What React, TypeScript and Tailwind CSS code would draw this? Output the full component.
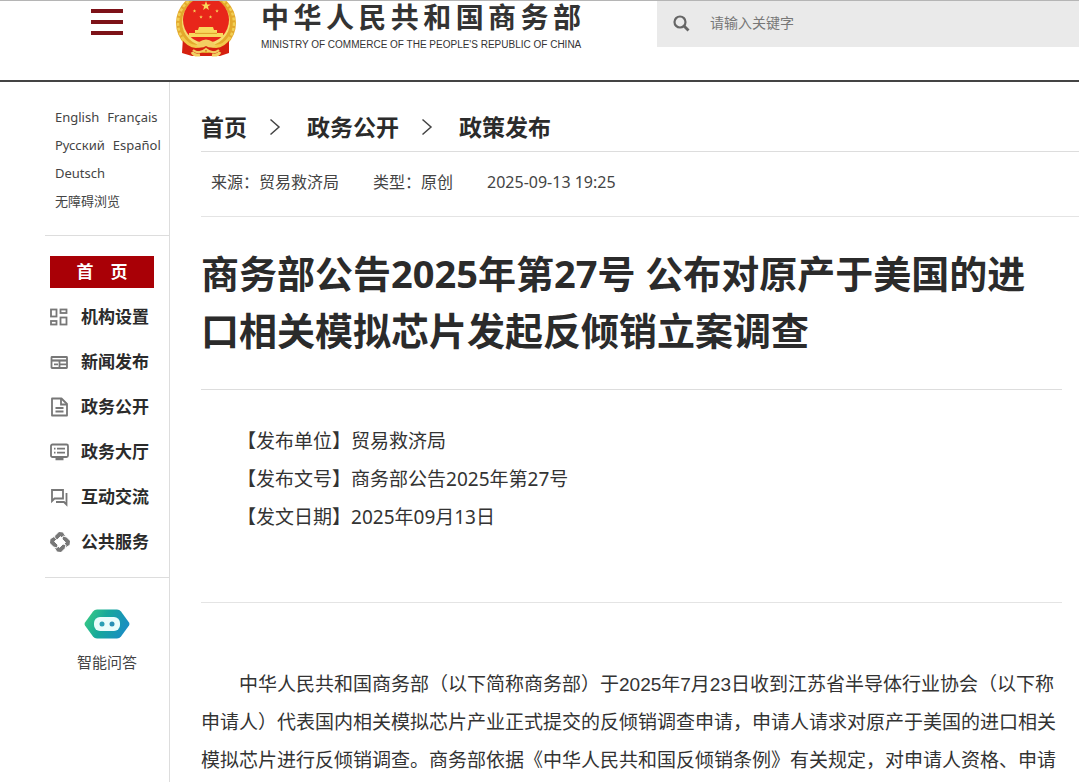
import type { ReactNode } from 'react'

interface MenuItem {
  label: string
  icon: ReactNode
}

const STAR = 'M0 -5 L1.2 -1.6 L4.8 -1.6 L1.9 0.6 L2.9 4 L0 1.9 L-2.9 4 L-1.9 0.6 L-4.8 -1.6 L-1.2 -1.6 Z'
const HAND = 'M4 7 L5 3.5 L9 -0.5 L13 0 L15.5 4 L12.5 6.5 L10.5 4.5 L7 8 Z'

function Emblem() {
  return (
    <svg viewBox="0 0 62 57" className="h-[57px] w-[62px] shrink-0" role="img" aria-label="国徽">
      {/* Drapery behind the wreath */}
      <path d="M8 36 L7 52 L17 55 H45 L54 52 L53 36 Z" fill="#d5200f" />
      {/* Wreath */}
      <circle cx="31" cy="22" r="30" fill="#e3a92c" />
      <circle cx="31" cy="22" r="28" fill="none" stroke="#f2cf55" strokeWidth="2.5" strokeDasharray="3 2" />
      <circle cx="31" cy="21" r="24" fill="#f6dc6e" />
      <circle cx="31" cy="19" r="23" fill="#e8261a" />
      <g fill="#f8d95c">
        <path d={STAR} transform="translate(31 5)" />
        <path d={STAR} transform="translate(19.5 10) scale(.38)" />
        <path d={STAR} transform="translate(42 10) scale(.38)" />
        <path d={STAR} transform="translate(26 16) scale(.38)" />
        <path d={STAR} transform="translate(35.5 16) scale(.38)" />
        <path d="M24 26 H38 L39 29 H42 V32 H48 V36 H14 V32 H20 V29 H23 Z" />
      </g>
      <path d="M20 32.4 H42" stroke="#d98d1c" strokeWidth=".8" />
      {/* Ribbons and gear at the foot */}
      <path d="M8 38 C14 45 20 47 27 44 L31 42 L35 44 C42 47 48 45 54 38 L54 52 L44 50 H18 L8 52 Z" fill="#d5200f" />
      <path d="M7 36 C13 45 20 47 27 44 M55 36 C49 45 42 47 35 44" fill="none" stroke="#f2c94a" strokeWidth="3" />
      <path d="M24 41 Q31 36 38 41 L41 45 Q36 48 31 45 Q26 48 21 45 Z" fill="#f3cf62" />
      <path d="M18 49 Q24 54 31 48 Q38 54 44 49" fill="none" stroke="#f3cf62" strokeWidth="2.2" />
      <path d="M17 51 Q19 55 25 54 M45 51 Q43 55 37 54" fill="none" stroke="#f3cf62" strokeWidth="2.8" />
    </svg>
  )
}

function RobotIcon() {
  return (
    <svg viewBox="0 0 46 30" className="h-[30px] w-[46px]" aria-hidden="true">
      <defs>
        <linearGradient id="robot" x1="0" y1="0" x2="1" y2="0.3">
          <stop offset="0" stopColor="#3fcf80" />
          <stop offset="0.5" stopColor="#16a89b" />
          <stop offset="1" stopColor="#1a8fc0" />
        </linearGradient>
      </defs>
      <path d="M13 0.5 H33 Q35.5 0.5 37 2.5 L45 13.5 Q46 15 45 16.5 L37 27.5 Q35.5 29.5 33 29.5 H13 Q10.5 29.5 9 27.5 L1 16.5 Q0 15 1 13.5 L9 2.5 Q10.5 0.5 13 0.5 Z" fill="url(#robot)" />
      <rect x="10" y="8" width="26" height="14" rx="6" fill="#eafcfb" />
      <circle cx="18" cy="15" r="2.5" fill="#2a9fb5" />
      <circle cx="28" cy="15" r="2.5" fill="#2a8fb5" />
    </svg>
  )
}

function MenuIcon({ children }: { children: ReactNode }) {
  return (
    <svg
      viewBox="0 0 20 20"
      className="size-5 shrink-0"
      fill="none"
      stroke="#777777"
      strokeWidth="1.8"
      aria-hidden="true"
    >
      {children}
    </svg>
  )
}

const menuItems: MenuItem[] = [
  {
    label: '机构设置',
    icon: (
      <MenuIcon>
        <rect x="1" y="2.5" width="5.5" height="7" />
        <rect x="10.5" y="2.5" width="6" height="3.5" />
        <rect x="1" y="14" width="5.5" height="3.5" />
        <rect x="10.5" y="10.5" width="6" height="7" />
      </MenuIcon>
    ),
  },
  {
    label: '新闻发布',
    icon: (
      <MenuIcon>
        <rect x="1.5" y="5" width="15.5" height="11" rx="0.5" />
        <path d="M1 8.5 H17" strokeWidth="2.2" />
        <path d="M4 12.3 H8 M9 12.3 H17 M9.5 9 V16" />
      </MenuIcon>
    ),
  },
  {
    label: '政务公开',
    icon: (
      <MenuIcon>
        <path d="M2 1.5 H11.5 L17 7 V18.5 H2 Z" strokeLinejoin="round" />
        <path d="M11 1.5 V7.5 H17 M5.5 11 H13.5 M5.5 14.5 H13.5" />
      </MenuIcon>
    ),
  },
  {
    label: '政务大厅',
    icon: (
      <MenuIcon>
        <rect x="1" y="2.5" width="17" height="12.5" rx="1.5" />
        <path d="M4 6.7 H5.5 M7 6.7 H15 M4 10.7 H5.5 M7 10.7 H15" />
        <path d="M5.5 17 H13.5" strokeWidth="2.5" />
      </MenuIcon>
    ),
  },
  {
    label: '互动交流',
    icon: (
      <MenuIcon>
        <path d="M2 3 H13 V11.5 H4.5 L2 14 Z" />
        <path d="M16.5 6 V17.5 L14 15 H6" />
      </MenuIcon>
    ),
  },
  {
    label: '公共服务',
    icon: (
      <MenuIcon>
        <g fill="#777777" stroke="#ffffff" strokeWidth="0.9">
          <path d={HAND} />
          <path d={HAND} transform="rotate(90 10 10)" />
          <path d={HAND} transform="rotate(180 10 10)" />
          <path d={HAND} transform="rotate(270 10 10)" />
        </g>
      </MenuIcon>
    ),
  },
]

const languages = [['English', 'Français'], ['Русский', 'Español'], ['Deutsch'], ['无障碍浏览']]

const notice = [
  { name: '发布单位', value: '贸易救济局' },
  { name: '发布文号', value: '商务部公告2025年第27号' },
  { name: '发文日期', value: '2025年09月13日' },
]

function Header() {
  return (
    <header className="flex h-[82px] items-start border-t border-b-2 border-t-[#b5b5b5] border-b-[#444444] pl-[91px]">
      <button type="button" aria-label="菜单" className="mt-2 flex w-8 shrink-0 flex-col gap-[7px]">
        <span className="h-1 bg-[#7d1218]" />
        <span className="h-1 bg-[#7d1218]" />
        <span className="h-1 bg-[#7d1218]" />
      </button>
      <a href="#" className="ml-[52px] flex shrink-0 items-start gap-6">
        <Emblem />
        <span className="block w-80 text-[#333333]">
          <span className="block text-[28px] leading-[32px] font-bold [text-align-last:justify]">
            中华人民共和国商务部
          </span>
          <span className="mt-1 block font-['Liberation_Sans',sans-serif] text-[10px] leading-4 whitespace-nowrap">
            MINISTRY OF COMMERCE OF THE PEOPLE'S REPUBLIC OF CHINA
          </span>
        </span>
      </a>
      <form className="ml-19 flex h-[46px] flex-1 items-start gap-5 bg-[#eaeaea] pt-3 pl-4">
        <svg viewBox="0 0 17 17" className="mt-[2px] size-[17px] shrink-0" fill="none" stroke="#666666" aria-hidden="true">
          <circle cx="7" cy="7" r="5.5" strokeWidth="2.2" />
          <path d="M11 11 L15.5 15.5" strokeWidth="2.8" />
        </svg>
        <input
          type="text"
          aria-label="请输入关键字"
          placeholder="请输入关键字"
          className="h-5 min-w-0 flex-1 bg-transparent text-sm leading-5 outline-none placeholder:text-[#777777]"
        />
      </form>
    </header>
  )
}

function Sidebar() {
  return (
    <aside className="w-[170px] shrink-0 border-r border-[#dddddd] pl-[45px]">
      <div className="border-b border-[#dddddd] pt-[21px] pb-5 pl-[10px] text-[13px] leading-7 text-[#444444]">
        {languages.map((row) => (
          <div key={row[0]} className="flex gap-2 whitespace-nowrap">
            {row.map((name) => (
              <a key={name} href="#">{name}</a>
            ))}
          </div>
        ))}
      </div>

      <nav className="border-b border-[#dddddd] pt-5 pr-[15px] pb-[13px] pl-[5px] text-[17px] font-bold text-[#2b2b2b]">
        <a href="#" className="mb-[6px] block h-8 bg-[#a90006] text-center leading-8 text-white">首　页</a>
        {menuItems.map((item) => (
          <a key={item.label} href="#" className="flex h-[45px] items-center gap-[11px] whitespace-nowrap">
            {item.icon}
            {item.label}
          </a>
        ))}
      </nav>

      <a href="#" className="flex flex-col items-center gap-[11px] pt-[31px] text-[15px] leading-6 text-[#444444]">
        <RobotIcon />
        智能问答
      </a>
    </aside>
  )
}

function Chevron() {
  return (
    <svg viewBox="0 0 12 18" className="h-[18px] w-3" fill="none" stroke="#444444" strokeWidth="1.5" aria-hidden="true">
      <path d="M1.5 1.5 L10 9 L1.5 16.5" />
    </svg>
  )
}

export default function App() {
  return (
    <div className="flex min-h-screen flex-col bg-white font-['Noto_Sans','Noto_Sans_CJK_SC',sans-serif] text-[#2b2b2b]">
      <Header />
      <div className="flex flex-1">
        <Sidebar />
        <main className="min-w-0 flex-1 pl-[31px]">
          <nav className="flex items-center border-b border-[#dddddd] pt-7 pb-[7px] text-[23px] leading-[34px] font-bold">
            <a href="#" className="mr-[22px]">首页</a>
            <Chevron />
            <a href="#" className="mr-[22px] ml-[26px]">政务公开</a>
            <Chevron />
            <a href="#" className="ml-[26px]">政策发布</a>
          </nav>

          <div className="flex gap-[34px] border-b border-[#e4e4e4] pt-5 pb-6 pl-[10px] text-base leading-5 text-[#444444]">
            <span>来源：贸易救济局</span>
            <span>类型：原创</span>
            <time>2025-09-13 19:25</time>
          </div>

          <article className="pr-[17px]">
            <h1 className="border-b border-[#dddddd] pt-7 pb-[30px] text-[38px] leading-[57px] font-bold">
              商务部公告2025年第27号 公布对原产于美国的进口相关模拟芯片发起反倾销立案调查
            </h1>
            <div className="border-b border-[#e4e4e4] pt-8 pb-[66px] pl-9 text-[19px] leading-[38px] text-[#333333]">
              {notice.map((row) => (
                <p key={row.name}>【{row.name}】{row.value}</p>
              ))}
            </div>
            <p className="pt-[63px] indent-[38px] font-['Liberation_Sans','Noto_Sans_CJK_SC',sans-serif] text-[19px] leading-[38px] text-[#333333]">
              中华人民共和国商务部（以下简称商务部）于2025年7月23日收到江苏省半导体行业协会（以下称申请人）代表国内相关模拟芯片产业正式提交的反倾销调查申请，申请人请求对原产于美国的进口相关模拟芯片进行反倾销调查。商务部依据《中华人民共和国反倾销条例》有关规定，对申请人资格、申请
            </p>
          </article>
        </main>
      </div>
    </div>
  )
}
